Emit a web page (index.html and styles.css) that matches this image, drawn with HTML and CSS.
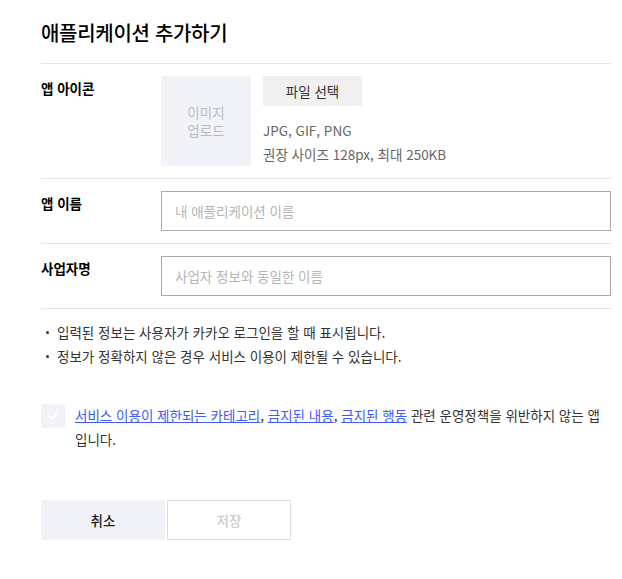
FILE: index.html
```html
<!DOCTYPE html>
<html lang="ko">
<head>
<meta charset="utf-8">
<title>애플리케이션 추가하기</title>
<link rel="stylesheet" href="styles.css">
</head>
<body>
<div class="page">
  <h1 class="title">애플리케이션 추가하기</h1>
  <div class="form">
    <div class="row">
      <div class="label">앱 아이콘</div>
      <div class="field icon-field">
        <div class="icon-box">이미지<br>업로드</div>
        <div class="icon-info">
          <button class="file-btn" type="button">파일 선택</button>
          <p class="hint">JPG, GIF, PNG<br>권장 사이즈 128px, 최대 250KB</p>
        </div>
      </div>
    </div>
    <div class="row">
      <div class="label">앱 이름</div>
      <div class="field"><input class="text-input" type="text" placeholder="내 애플리케이션 이름"></div>
    </div>
    <div class="row">
      <div class="label">사업자명</div>
      <div class="field"><input class="text-input" type="text" placeholder="사업자 정보와 동일한 이름"></div>
    </div>
  </div>
  <ul class="notice">
    <li>입력된 정보는 사용자가 카카오 로그인을 할 때 표시됩니다.</li>
    <li>정보가 정확하지 않은 경우 서비스 이용이 제한될 수 있습니다.</li>
  </ul>
  <label class="agree">
    <span class="check"><svg width="14" height="14" viewBox="0 0 14 14"><path d="M2.5 7.2 L5.6 10 L11.5 3.8" fill="none" stroke="#ffffff" stroke-width="1.6" stroke-linecap="round" stroke-linejoin="round"/></svg></span>
    <span class="agree-text"><a href="#">서비스 이용이 제한되는 카테고리</a>, <a href="#">금지된 내용</a>, <a href="#">금지된 행동</a> 관련 운영정책을 위반하지 않는 앱입니다.</span>
  </label>
  <div class="actions">
    <button class="btn btn-cancel" type="button">취소</button>
    <button class="btn btn-save" type="button" disabled>저장</button>
  </div>
</div>
</body>
</html>
```
FILE: styles.css
```css
* { box-sizing: border-box; }
html, body { margin: 0; padding: 0; background: #fff; }
body {
  font-family: "Noto Sans CJK KR", "Noto Sans", sans-serif;
  color: #222;
}
.page {
  width: 570px;
  margin-left: 41px;
  padding-top: 18px;
}
.title {
  margin: 0 0 15px;
  font-size: 20px;
  line-height: 30px;
  font-weight: 500;
  letter-spacing: -0.3px;
  color: #000;
}
.form { border-top: 1px solid #e5e5e5; }
.row {
  display: flex;
  padding: 12px 0;
  border-bottom: 1px solid #e5e5e5;
}
.label {
  width: 120px;
  flex: none;
  font-size: 13.5px;
  line-height: 24px;
  font-weight: 700;
  color: #000;
}
.field { flex: 1; }
.icon-field { display: flex; gap: 12px; }
.icon-box {
  width: 90px;
  height: 90px;
  background: #f2f3f8;
  color: #bbbbbb;
  font-size: 13.5px;
  line-height: 18px;
  display: flex;
  align-items: center;
  justify-content: center;
  text-align: center;
}
.icon-info { display: flex; flex-direction: column; align-items: flex-start; }
.file-btn {
  width: 99px;
  height: 30px;
  border: 0;
  background: #f0f0f0;
  color: #333;
  font-family: inherit;
  font-size: 13.5px;
  padding: 0;
}
.hint {
  margin: 12px 0 0;
  font-size: 13.5px;
  line-height: 24px;
  color: #666;
}
.text-input {
  display: block;
  width: 100%;
  height: 40px;
  border: 1px solid #aaaaaa;
  padding: 0 13px;
  font-family: inherit;
  font-size: 13.5px;
  color: #222;
  outline: none;
}
.text-input::placeholder { color: #b5b5b5; }
.notice {
  list-style: none;
  margin: 11px 0 0;
  padding: 0;
}
.notice li {
  position: relative;
  padding-left: 16px;
  font-size: 13.5px;
  line-height: 24px;
  color: #333;
}
.notice li::before {
  content: "";
  position: absolute;
  left: 5px;
  top: 11px;
  width: 3px;
  height: 3px;
  border-radius: 50%;
  background: #333;
}
.agree {
  display: flex;
  gap: 10px;
  margin-top: 35px;
  align-items: flex-start;
}
.check {
  flex: none;
  width: 24px;
  height: 24px;
  margin-top: 1px;
  background: #f2f3f8;
  display: flex;
  align-items: center;
  justify-content: center;
}
.agree-text {
  font-size: 13.5px;
  line-height: 24px;
  color: #333;
}
.agree-text a { color: #3d5afe; text-decoration: underline; }
.actions {
  display: flex;
  gap: 2px;
  margin-top: 49px;
}
.btn {
  width: 124px;
  height: 40px;
  font-family: inherit;
  font-size: 13.5px;
  padding: 0;
}
.btn-cancel {
  border: 0;
  background: #f2f3f8;
  color: #222;
  font-weight: 500;
}
.btn-save {
  border: 1px solid #dddddd;
  background: #fff;
  color: #cccccc;
  font-weight: 500;
}
```
